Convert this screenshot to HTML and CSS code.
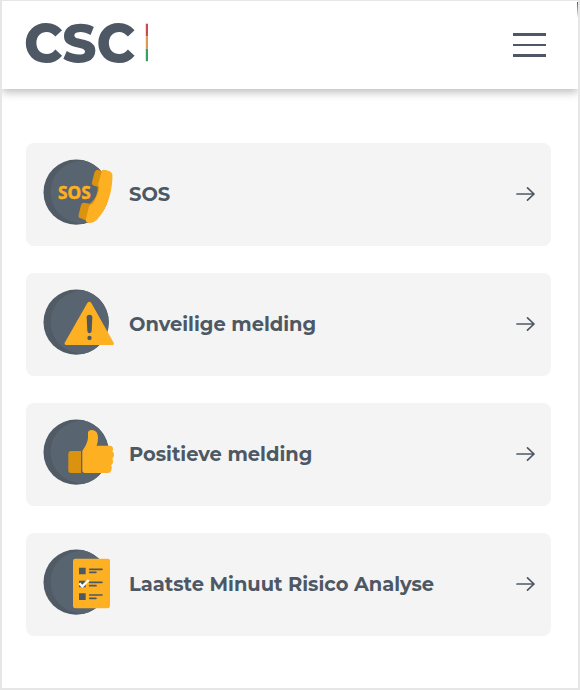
FILE: index.html
```html
<!DOCTYPE html>
<html lang="nl">
<head>
  <meta charset="UTF-8">
  <meta name="viewport" content="width=device-width, initial-scale=1">
  <title>CSC</title>
  <link rel="stylesheet" href="styles.css">
</head>
<body>
  <header class="header">
    <a href="#" class="logo" aria-label="CSC">
      <svg width="124" height="48" viewBox="0 0 124 48">
        <text class="logo-text" x="-2" y="42" textLength="111" lengthAdjust="spacingAndGlyphs">CSC</text>
        <rect x="119.800" y="2.700" width="2.200" height="12.500" fill="#d0494f"/>
        <rect x="119.800" y="15.200" width="2.200" height="12.500" fill="#e09a50"/>
        <rect x="119.800" y="27.700" width="2.200" height="12.500" fill="#35a35d"/>
      </svg>
    </a>
    <button class="menu-toggle" aria-label="Menu">
      <span class="bar"></span>
      <span class="bar"></span>
      <span class="bar"></span>
    </button>
  </header>

  <main class="list">
    <a href="#" class="card">
      <svg class="card-icon" viewBox="69 72 216 201">
        <circle cx="168.500" cy="171.500" r="98" fill="#505b66"/>
        <path d="M190 76A98 98 0 0 1 190 267C126 262 92 220 92 171S126 81 190 76Z" fill="#586470"/>
        <text class="sos" x="114" y="192" textLength="98" lengthAdjust="spacingAndGlyphs">SOS</text>
        <path d="M234 104Q226 104 223 114L216 142Q214 150 222 152L233 155Q235 184 210 206L192 203Q185 203 183 210L176 239Q174 248 182 250L212 262L252 112Z" fill="#db930f"/>
        <path d="M246 106Q250 103 257 105Q274 108 277 118C279 152 268 216 231 254Q218 267 204 263Q195 261 198 251L206 218Q209 207 218 206Q232 188 238 157Q233 154 235 146Z" fill="#fdb022"/>
      </svg>
      <span class="card-title">SOS</span>
      <svg class="arrow" viewBox="0 0 20 16"><path d="M1 8H18M11.500 1.800L18 8L11.500 14.200"/></svg>
    </a>

    <a href="#" class="card">
      <svg class="card-icon" viewBox="69 72 216 201">
        <circle cx="168.500" cy="171.500" r="98" fill="#505b66"/>
        <path d="M190 76A98 98 0 0 1 190 267C126 262 92 220 92 171S126 81 190 76Z" fill="#586470"/>
        <path d="M202 114Q208 107 214 114L281 233Q284 240 276 240H139Q131 240 135 232Z" fill="#fdb022"/>
        <path d="M200 157Q200 149 208.500 149T217 157L215 198Q214 205 208.500 205T202 198Z" fill="#4d5863"/>
        <circle cx="208.500" cy="219" r="6.500" fill="#4d5863"/>
      </svg>
      <span class="card-title">Onveilige melding</span>
      <svg class="arrow" viewBox="0 0 20 16"><path d="M1 8H18M11.500 1.800L18 8L11.500 14.200"/></svg>
    </a>

    <a href="#" class="card">
      <svg class="card-icon" viewBox="69 72 216 201">
        <circle cx="168.500" cy="171.500" r="98" fill="#505b66"/>
        <path d="M190 76A98 98 0 0 1 190 267C126 262 92 220 92 171S126 81 190 76Z" fill="#586470"/>
        <path d="M153 168H183V234H153Q145 234 145 226V177Q145 168 153 168Z" fill="#db930f"/>
        <path d="M187 168C193 160 204 142 204 127V113Q205 105 215 105C229 105 234 116 234 129Q234 142 230 152H270Q279 153 279 161Q279 166 277 169Q283 174 282 181Q281 188 277 191Q280 196 279 202Q278 209 273 211Q277 216 275 222Q273 234 263 234H195Q187 234 187 226Z" fill="#fdb022"/>
      </svg>
      <span class="card-title">Positieve melding</span>
      <svg class="arrow" viewBox="0 0 20 16"><path d="M1 8H18M11.500 1.800L18 8L11.500 14.200"/></svg>
    </a>

    <a href="#" class="card">
      <svg class="card-icon" viewBox="69 72 216 201">
        <circle cx="168.500" cy="171.500" r="98" fill="#505b66"/>
        <path d="M190 76A98 98 0 0 1 190 267C126 262 92 220 92 171S126 81 190 76Z" fill="#586470"/>
        <rect x="159" y="101" width="111" height="149" rx="7" fill="#fdb022"/>
        <path d="M177 128h20v20h-20zM177 167h20v20h-20zM177 205h20v20h-20z" fill="#4d5863"/>
        <path d="M209 133H246M209 142H228M209 172H246M209 182H228M209 210H246M209 220H228" fill="none" stroke="#4d5863" stroke-width="5" stroke-linecap="round"/>
        <path d="M178 175L187 184L206 165" fill="none" stroke="#fff" stroke-width="7"/>
      </svg>
      <span class="card-title">Laatste Minuut Risico Analyse</span>
      <svg class="arrow" viewBox="0 0 20 16"><path d="M1 8H18M11.500 1.800L18 8L11.500 14.200"/></svg>
    </a>
  </main>
</body>
</html>
```
FILE: styles.css
```css
:root {
  --frame: #e6e6e6;
  --card: #f4f4f4;
  --text: #4d5864;
}
* {
  box-sizing: border-box;
}
body {
  margin: 0;
  height: 690px;
  border: 2px solid var(--frame);
  border-top-width: 1.5px;
  background: #fff;
  color: var(--text);
  font-family: Montserrat, Inter, sans-serif;
  overflow: hidden;
}
.header {
  position: relative;
  height: 88px;
  padding: 0 32px 0 24px;
  display: flex;
  align-items: center;
  justify-content: space-between;
  background: #fff;
  box-shadow: 0 3px 9px rgba(0, 0, 0, 0.28);
}
.header::after {
  content: '';
  position: absolute;
  top: 1px;
  right: 0;
  width: 1px;
  height: 16px;
  background: linear-gradient(#555, #fff);
}
.logo {
  display: flex;
  color: var(--text);
}
.logo svg {
  overflow: visible;
}
.logo-text {
  font-size: 55px;
  font-weight: 800;
  fill: var(--text);
}
.menu-toggle {
  display: flex;
  flex-direction: column;
  gap: 8px;
  padding: 0;
  border: none;
  background: none;
}
.bar {
  width: 33px;
  height: 2.8px;
  background: var(--text);
}
.list {
  display: flex;
  flex-direction: column;
  gap: 27px;
  padding: 54px 27px 0 24px;
}
.card {
  display: flex;
  align-items: center;
  height: 103px;
  padding: 0 15px 2px 17px;
  border-radius: 8px;
  background: var(--card);
  color: var(--text);
  text-decoration: none;
}
.card-icon {
  width: 72px;
  height: 67px;
  margin: 0 14px 3px 0;
}
.card-title {
  flex: 1;
  font-size: 19.45px;
  font-weight: 700;
  white-space: nowrap;
}
.sos {
  font-family: "Noto Sans", sans-serif;
  font-size: 54px;
  font-weight: 700;
  fill: #fdb022;
  stroke: #fdb022;
  stroke-width: 1.5;
}
.arrow {
  width: 20px;
  height: 16px;
  fill: none;
  stroke: var(--text);
  stroke-width: 1.7;
  stroke-linecap: round;
  stroke-linejoin: round;
}
```
